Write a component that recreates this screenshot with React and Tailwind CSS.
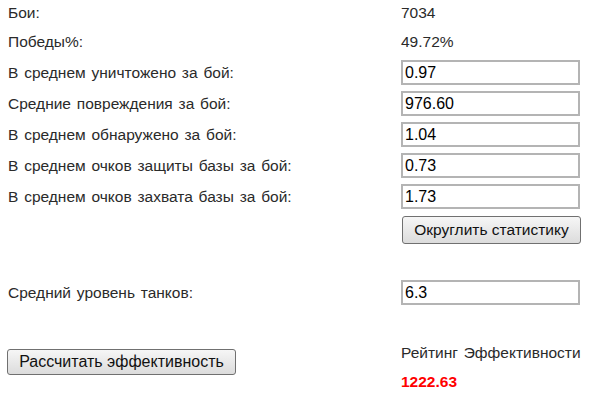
import { useState } from 'react';

const stats = [
    { label: 'В среднем уничтожено за бой:', value: '0.97' },
    { label: 'Средние повреждения за бой:', value: '976.60' },
    { label: 'В среднем обнаружено за бой:', value: '1.04' },
    { label: 'В среднем очков защиты базы за бой:', value: '0.73' },
    { label: 'В среднем очков захвата базы за бой:', value: '1.73' },
];

const btn = 'border border-[#707070] rounded-[3px] bg-gradient-to-b from-[#f6f6f6] to-[#dcdcdc] text-[#111] leading-none';
const inp = 'w-[179px] h-[25px] border-2 border-[#b4b4b4] px-[2px] text-[16px] text-black bg-white outline-none [word-spacing:0]';

const App = () => {
    const [values, setValues] = useState(stats.map((s) => s.value));
    const [tier, setTier] = useState('6.3');

    return (
        <div className="min-h-[405px] bg-white pl-[8px] text-[15.5px] text-[#2a2a2a] font-['Liberation_Sans',Arial,sans-serif] [word-spacing:1.5px]">
            <div className="flex h-[25px] items-center">
                <div className="w-[393px]">Бои:</div>
                <div>7034</div>
            </div>
            <div className="flex h-[25px] items-center mt-[4px]">
                <div className="w-[393px]">Победы%:</div>
                <div>49.72%</div>
            </div>
            {stats.map((s, i) => (
                <div key={s.label} className="flex h-[25px] items-center mt-[6px]">
                    <div className="w-[393px]">{s.label}</div>
                    <input
                        className={inp}
                        value={values[i]}
                        onChange={(e) => setValues(values.map((v, j) => (j === i ? e.target.value : v)))}
                    />
                </div>
            ))}
            <div className="flex mt-[7px]">
                <div className="w-[394px]"></div>
                <button className={`${btn} text-[15.5px] w-[179px] h-[28px]`}>Округлить статистику</button>
            </div>
            <div className="flex h-[25px] items-center mt-[36px]">
                <div className="w-[393px]">Средний уровень танков:</div>
                <input className={inp} value={tier} onChange={(e) => setTier(e.target.value)} />
            </div>
            <div className="flex items-start mt-[33px]">
                <div className="w-[393px]">
                    <button className={`${btn} text-[16px] mt-[11px] -ml-[1px] w-[229px] h-[26px]`}>Рассчитать эффективность</button>
                </div>
                <div className="leading-[29px]">
                    <div>Рейтинг Эффективности</div>
                    <div className="font-bold text-[#ff0000]">1222.63</div>
                </div>
            </div>
        </div>
    );
};

export default App;
